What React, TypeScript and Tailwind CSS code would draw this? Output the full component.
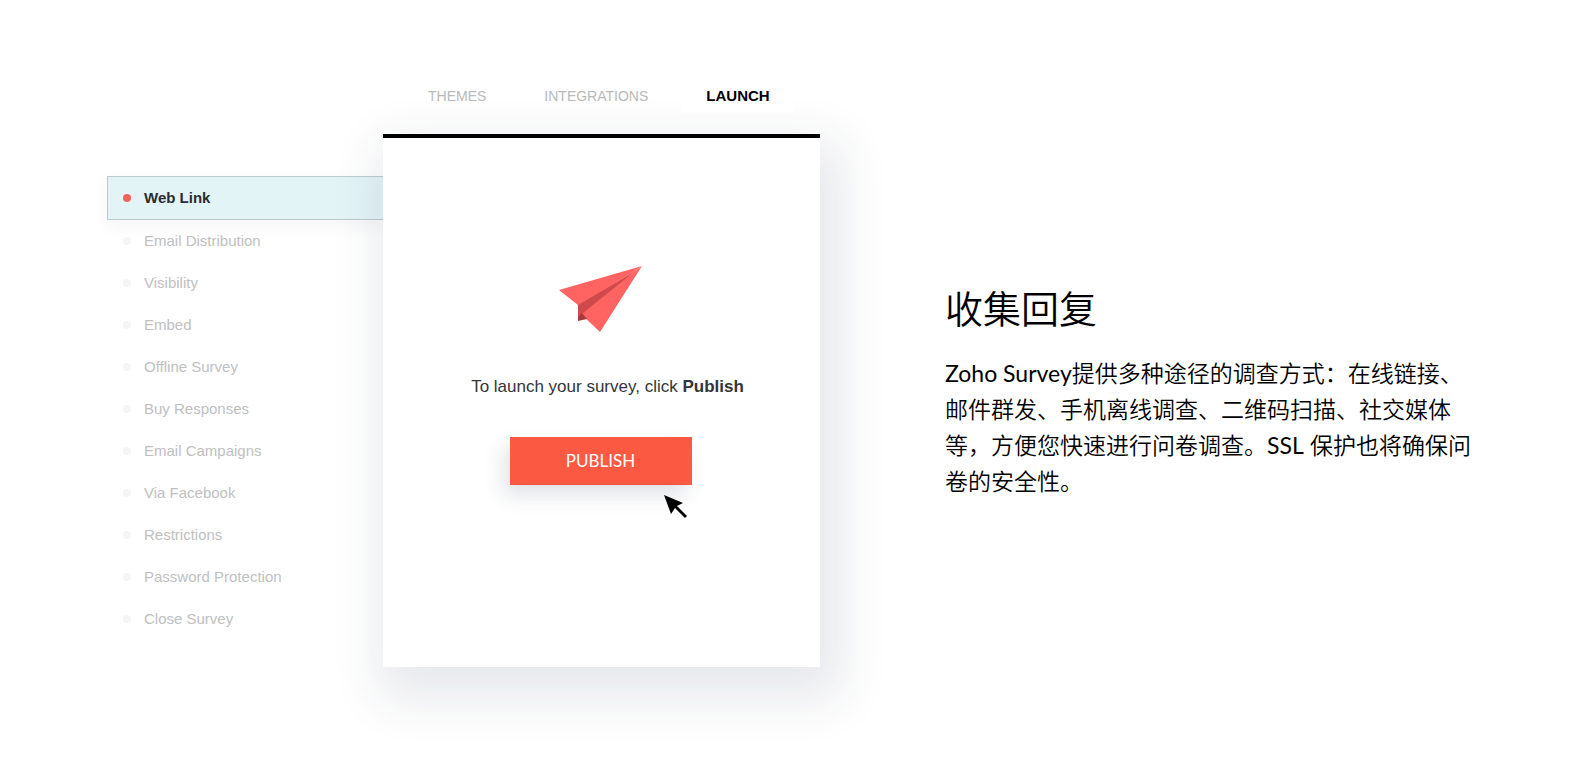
import clsx from "clsx";

const tabs = ["THEMES", "INTEGRATIONS", "LAUNCH"];

const channels = [
  "Web Link",
  "Email Distribution",
  "Visibility",
  "Embed",
  "Offline Survey",
  "Buy Responses",
  "Email Campaigns",
  "Via Facebook",
  "Restrictions",
  "Password Protection",
  "Close Survey",
];

function PaperPlane() {
  return (
    <svg viewBox="0 0 84 66" className="h-[66px] w-[84px]" aria-hidden>
      <path d="M0 24 83 0 19 39Z" fill="#ff6362" />
      <path d="M83 0 41 66 22 48Z" fill="#ff6362" />
      <path d="M83 0 19 38v17l5-8Z" fill="#ff6362" />
      <path d="M74 7 19 39v15l5-7Z" fill="#cf4a4a" />
      <path d="M19 55v-4l4-4 5 6Z" fill="#a93a3a" />
    </svg>
  );
}

function Cursor() {
  return (
    <svg viewBox="0 0 24 24" className="h-6 w-6" aria-hidden>
      <path d="M0 0 19 8 13 11 23 21 21 23 11 13 7 19Z" fill="#000" />
    </svg>
  );
}

function Tabs() {
  return (
    <nav className="flex items-end gap-[10px] pl-[21px]">
      {tabs.map((tab) => {
        const active = tab === "LAUNCH";
        return (
          <button
            key={tab}
            type="button"
            className={clsx(
              "h-9 px-6",
              active
                ? "relative z-10 bg-white/70 text-[15px] font-bold text-black"
                : "text-sm text-[#b9b9b9]",
            )}
          >
            {tab}
          </button>
        );
      })}
    </nav>
  );
}

function ChannelList() {
  return (
    <ul className="mt-[42px]">
      {channels.map((channel, index) => {
        const active = index === 0;
        return (
          <li key={channel}>
            <button
              type="button"
              className={clsx(
                "flex w-full items-center gap-[13px] text-left text-[15px]",
                active
                  ? "h-11 border border-r-0 border-[#bccbce] bg-[#e3f4f6] pl-[15px] font-bold text-[#2b2d30] shadow-[0_6px_16px_rgba(60,60,100,0.05)]"
                  : "h-[42px] pl-4 text-[#c0c0c0]",
              )}
            >
              <span
                className={clsx(
                  "size-2 rounded-full",
                  active ? "bg-[#f0635c]" : "bg-[#f5f5f7]",
                )}
              />
              {channel}
            </button>
          </li>
        );
      })}
    </ul>
  );
}

function LaunchCard() {
  return (
    <div className="flex h-[533px] flex-col items-center border-t-4 border-black bg-white pt-[128px] shadow-[9px_20px_46px_12px_rgba(40,45,80,0.11)]">
      <div className="mr-[2px]">
        <PaperPlane />
      </div>
      <p className="mt-[43px] ml-3 text-[17px] leading-6 text-[#333538]">
        To launch your survey, click <strong>Publish</strong>
      </p>
      <div className="relative mt-[38px] mr-[2px]">
        <button
          type="button"
          className="h-12 w-[182px] bg-[#fc5943] font-[Lato,sans-serif] text-[17px] text-white shadow-[-6px_10px_20px_rgba(50,60,90,0.15)]"
        >
          PUBLISH
        </button>
        <span className="absolute top-[58px] left-[154px]">
          <Cursor />
        </span>
      </div>
    </div>
  );
}

export default function App() {
  return (
    <main className="flex items-center gap-[125px] overflow-hidden bg-white px-[107px] pt-[78px] pb-24">
      <section className="grid shrink-0 grid-cols-[276px_437px] gap-y-5 font-['Liberation_Sans',Arial,sans-serif]">
        <div className="col-start-2">
          <Tabs />
        </div>
        <ChannelList />
        <LaunchCard />
      </section>

      <section className="mt-[34px] shrink-0 font-[Lato,'Noto_Sans_CJK_SC',sans-serif] text-black">
        <h2 className="text-[38px] leading-[54px] font-[350]">收集回复</h2>
        <p className="mt-5 text-[23px] leading-9 font-[350]">
          <span className="font-normal">Zoho Survey</span>
          提供多种途径的调查方式：在线链接、
          <br />
          邮件群发、手机离线调查、二维码扫描、社交媒体
          <br />
          等，方便您快速进行问卷调查。<span className="font-normal">SSL</span>{" "}
          保护也将确保问
          <br />
          卷的安全性。
        </p>
      </section>
    </main>
  );
}
